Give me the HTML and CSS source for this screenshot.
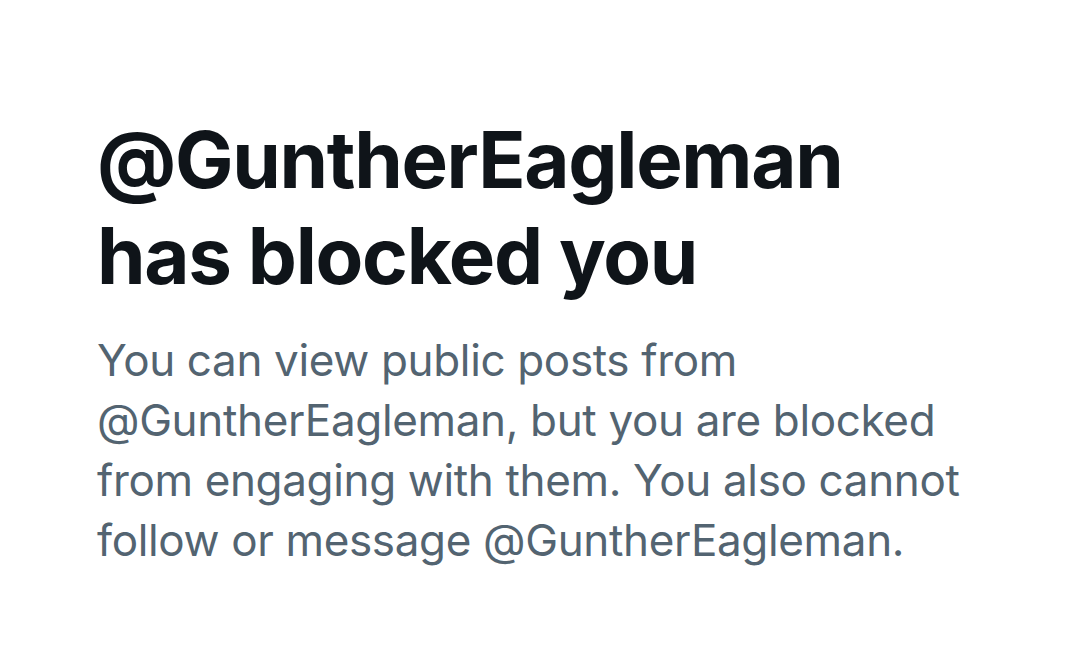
FILE: index.html
```html
<!DOCTYPE html>
<html>
<head>
<meta charset="utf-8">
<link rel="stylesheet" href="styles.css">
</head>
<body>
<main class="blocked">
  <h1 class="title">@GuntherEagleman<br>has blocked you</h1>
  <p class="desc">You can view public posts from<br>@GuntherEagleman, but you are blocked<br>from engaging with them. You also cannot<br>follow or message @GuntherEagleman.</p>
</main>
</body>
</html>
```
FILE: styles.css
```css
html, body {
  margin: 0;
  padding: 0;
  background: #ffffff;
}
.blocked {
  padding: 112px 0 0 97px;
  display: flex;
  flex-direction: column;
}
.title {
  margin: 0;
  font-family: Inter, "Noto Sans", sans-serif;
  font-weight: 700;
  font-size: 78px;
  line-height: 96px;
  color: #0f1419;
  letter-spacing: -1.3px;
}
.desc {
  margin: 26px 0 0 0;
  font-family: Inter, "Noto Sans", sans-serif;
  font-weight: 400;
  font-size: 44px;
  line-height: 60px;
  color: #536471;
  letter-spacing: -0.35px;
}
```
